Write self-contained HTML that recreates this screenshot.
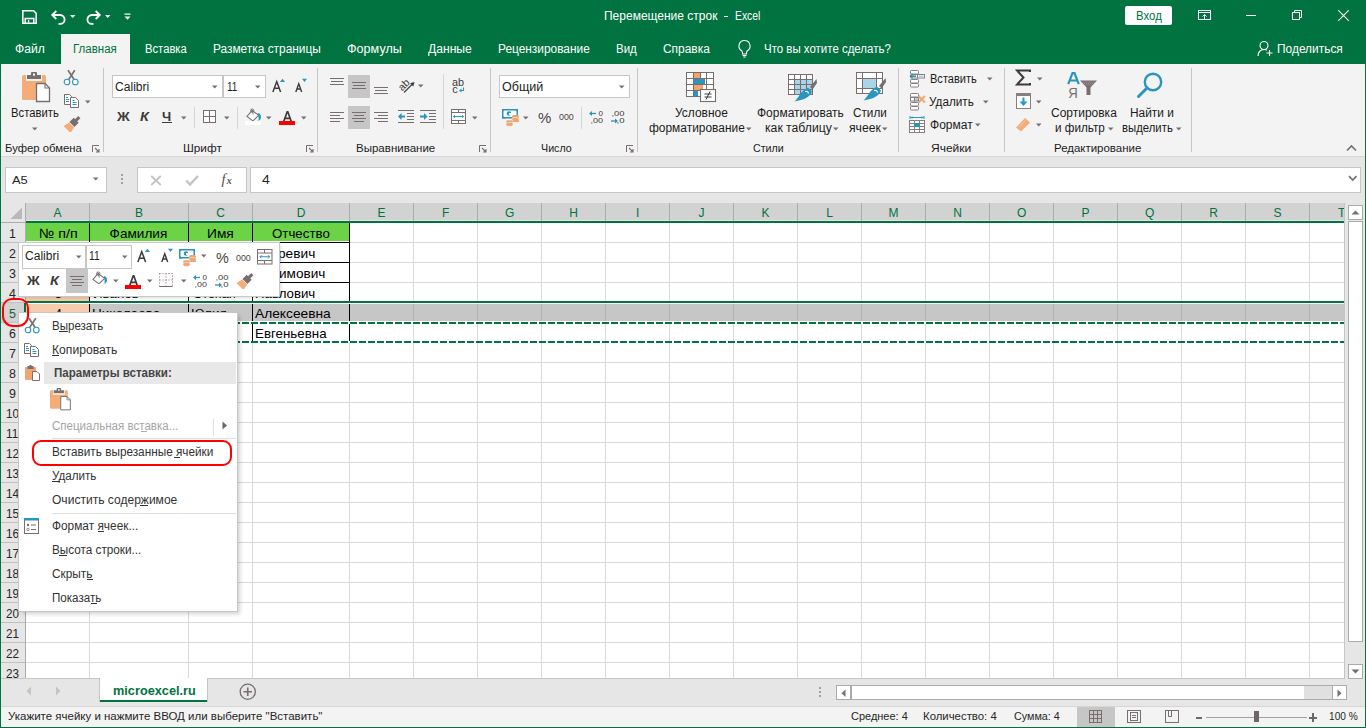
<!DOCTYPE html>
<html><head><meta charset="utf-8"><style>
html,body{margin:0;padding:0;}
body{width:1366px;height:728px;overflow:hidden;position:relative;background:#007340;font-family:"Liberation Sans",sans-serif;}
.a{position:absolute;display:block;}
.t{position:absolute;white-space:pre;line-height:20px;transform-origin:0 0;font-family:"Liberation Sans",sans-serif;}
</style></head><body>
<svg class="a" style="left:22px;top:10px;" width="15" height="15" viewBox="0 0 15 15"><path d="M0.8 0.8H11.6L14.2 3.4V13.2H0.8Z" fill="none" stroke="#ffffff" stroke-width="1.6"/><path d="M3.2 13V8.6H11.8V13" fill="none" stroke="#ffffff" stroke-width="1.5"/><path d="M6.6 9.8V12.6" stroke="#ffffff" stroke-width="1.3"/></svg>
<svg class="a" style="left:50px;top:9px;" width="17" height="16" viewBox="0 0 17 16"><path d="M2.5 6H10.2a4.4 4.4 0 0 1 0 8.8H8.5" fill="none" stroke="#ffffff" stroke-width="1.8"/><path d="M6.3 2L2.2 6L6.3 10" fill="none" stroke="#ffffff" stroke-width="1.8"/></svg>
<svg class="a" style="left:70px;top:15px;" width="6" height="4" viewBox="0 0 6 4"><path d="M0 0H5.5L2.75 3Z" fill="#ffffff"/></svg>
<svg class="a" style="left:85px;top:9px;" width="17" height="16" viewBox="0 0 17 16"><path d="M14.5 6H6.8a4.4 4.4 0 0 0 0 8.8H8.5" fill="none" stroke="#ffffff" stroke-width="1.8"/><path d="M10.7 2L14.8 6L10.7 10" fill="none" stroke="#ffffff" stroke-width="1.8"/></svg>
<svg class="a" style="left:105px;top:15px;" width="6" height="4" viewBox="0 0 6 4"><path d="M0 0H5.5L2.75 3Z" fill="#ffffff"/></svg>
<svg class="a" style="left:124px;top:13px;" width="8" height="8" viewBox="0 0 8 8"><rect x="0.5" y="0.5" width="6" height="1.2" fill="#ffffff"/><path d="M0.5 3.5H6.5L3.5 6.8Z" fill="#ffffff"/></svg>
<div class="t" style="left:604.20px;top:6.00px;font-size:12.3px;color:#ffffff;transform:scaleX(0.9757);">Перемещение строк</div>
<div class="a" style="left:724px;top:16px;width:4px;height:1px;background:#ffffff;"></div>
<div class="t" style="left:735.40px;top:6.00px;font-size:12.3px;color:#ffffff;transform:scaleX(0.8446);">Excel</div>
<div class="a" style="left:1125px;top:6px;width:47px;height:19px;background:#fff;border-radius:2px"></div>
<div class="t" style="left:1135.60px;top:6.00px;font-size:12px;color:#007340;transform:scaleX(0.9505);">Вход</div>
<svg class="a" style="left:1198px;top:10px;" width="14" height="11" viewBox="0 0 14 11"><rect x="0.5" y="0.5" width="12" height="9" fill="none" stroke="#ffffff" stroke-width="1"/><path d="M0.5 2.5H12.5" stroke="#ffffff" stroke-width="1"/><path d="M6.5 9.5V4.5M4.5 6.5L6.5 4.5L8.5 6.5" fill="none" stroke="#ffffff" stroke-width="1"/></svg>
<div class="a" style="left:1246px;top:15px;width:10px;height:1px;background:#ffffff;"></div>
<svg class="a" style="left:1291px;top:9px;" width="12" height="12" viewBox="0 0 12 12"><rect x="1.5" y="3.5" width="7" height="7" fill="none" stroke="#ffffff" stroke-width="1"/><path d="M3.5 3.5V1.5H10.5V8.5H8.5" fill="none" stroke="#ffffff" stroke-width="1"/></svg>
<svg class="a" style="left:1338px;top:10px;" width="11" height="11" viewBox="0 0 11 11"><path d="M0.3 0.3L10.7 10.7M10.7 0.3L0.3 10.7" stroke="#ffffff" stroke-width="1.1"/></svg>
<div class="a" style="left:61px;top:34px;width:69px;height:30px;background:#f3f3f3;"></div>
<div class="t" style="left:14.60px;top:39.00px;font-size:12px;color:#ffffff;transform:scaleX(1.0099);">Файл</div>
<div class="t" style="left:72.60px;top:39.00px;font-size:12px;color:#007340;transform:scaleX(0.9590);">Главная</div>
<div class="t" style="left:144.60px;top:39.00px;font-size:12px;color:#ffffff;transform:scaleX(0.9369);">Вставка</div>
<div class="t" style="left:212.60px;top:39.00px;font-size:12px;color:#ffffff;transform:scaleX(0.9902);">Разметка страницы</div>
<div class="t" style="left:346.60px;top:39.00px;font-size:12px;color:#ffffff;transform:scaleX(1.0493);">Формулы</div>
<div class="t" style="left:427.60px;top:39.00px;font-size:12px;color:#ffffff;transform:scaleX(1.0102);">Данные</div>
<div class="t" style="left:497.60px;top:39.00px;font-size:12px;color:#ffffff;transform:scaleX(0.9907);">Рецензирование</div>
<div class="t" style="left:615.60px;top:39.00px;font-size:12px;color:#ffffff;transform:scaleX(0.9582);">Вид</div>
<div class="t" style="left:662.60px;top:39.00px;font-size:12px;color:#ffffff;transform:scaleX(0.9939);">Справка</div>
<div class="t" style="left:763.60px;top:39.00px;font-size:12px;color:#ffffff;transform:scaleX(0.9558);">Что вы хотите сделать?</div>
<div class="t" style="left:1276.60px;top:39.00px;font-size:12px;color:#ffffff;transform:scaleX(0.9930);">Поделиться</div>
<svg class="a" style="left:736px;top:39px;" width="17" height="19" viewBox="0 0 17 19"><path d="M8.5 1.5a5.5 5.5 0 0 0-3.2 10c.8.6 1.2 1.4 1.2 2.3V15h4v-1.2c0-.9.4-1.7 1.2-2.3a5.5 5.5 0 0 0-3.2-10Z" fill="none" stroke="#ffffff" stroke-width="1.1"/><path d="M6.5 16.5H10.5M7.3 18H9.7" stroke="#ffffff" stroke-width="1"/></svg>
<svg class="a" style="left:1257px;top:40px;" width="17" height="17" viewBox="0 0 17 17"><circle cx="7" cy="5.5" r="4" fill="none" stroke="#ffffff" stroke-width="1.1"/><path d="M1 16c0-4 2.5-6.5 6-6.5c1.2 0 2.2.3 3 .8" fill="none" stroke="#ffffff" stroke-width="1.1"/><path d="M12.5 10V16M9.5 13H15.5" stroke="#ffffff" stroke-width="1.1"/></svg>
<div class="a" style="left:1px;top:64px;width:1364px;height:92px;background:#f3f3f3;"></div>
<div class="a" style="left:1px;top:156px;width:1364px;height:1px;background:#d6d6d6;"></div>
<div class="a" style="left:1px;top:157px;width:1364px;height:46px;background:#e6e6e6;"></div>
<div class="a" style="left:103px;top:68px;width:1px;height:84px;background:#c6c6c6;"></div>
<div class="a" style="left:317px;top:68px;width:1px;height:84px;background:#c6c6c6;"></div>
<div class="a" style="left:490px;top:68px;width:1px;height:84px;background:#c6c6c6;"></div>
<div class="a" style="left:637px;top:68px;width:1px;height:84px;background:#c6c6c6;"></div>
<div class="a" style="left:898px;top:68px;width:1px;height:84px;background:#c6c6c6;"></div>
<div class="a" style="left:1004px;top:68px;width:1px;height:84px;background:#c6c6c6;"></div>
<div class="a" style="left:1191px;top:68px;width:1px;height:84px;background:#c6c6c6;"></div>
<div class="t" style="left:5.00px;top:138.00px;font-size:11.6px;color:#1c1c1c;transform:scaleX(0.9755);">Буфер обмена</div>
<div class="t" style="left:183.00px;top:138.00px;font-size:11.6px;color:#1c1c1c;transform:scaleX(1.0167);">Шрифт</div>
<div class="t" style="left:356.10px;top:138.00px;font-size:11.6px;color:#1c1c1c;transform:scaleX(0.9932);">Выравнивание</div>
<div class="t" style="left:540.60px;top:138.00px;font-size:11.6px;color:#1c1c1c;transform:scaleX(0.9232);">Число</div>
<div class="t" style="left:752.60px;top:138.00px;font-size:11.6px;color:#1c1c1c;transform:scaleX(0.9216);">Стили</div>
<div class="t" style="left:930.60px;top:138.00px;font-size:11.6px;color:#1c1c1c;transform:scaleX(1.0358);">Ячейки</div>
<div class="t" style="left:1054.10px;top:138.00px;font-size:11.6px;color:#1c1c1c;transform:scaleX(0.9879);">Редактирование</div>
<svg class="a" style="left:92px;top:145px;" width="8" height="8" viewBox="0 0 8 8"><path d="M0.5 7V0.5H7" fill="none" stroke="#786e6e" stroke-width="1"/><path d="M3 3L7 7M7 4V7H4" fill="none" stroke="#786e6e" stroke-width="1.1"/></svg>
<svg class="a" style="left:306px;top:145px;" width="8" height="8" viewBox="0 0 8 8"><path d="M0.5 7V0.5H7" fill="none" stroke="#786e6e" stroke-width="1"/><path d="M3 3L7 7M7 4V7H4" fill="none" stroke="#786e6e" stroke-width="1.1"/></svg>
<svg class="a" style="left:626px;top:145px;" width="8" height="8" viewBox="0 0 8 8"><path d="M0.5 7V0.5H7" fill="none" stroke="#786e6e" stroke-width="1"/><path d="M3 3L7 7M7 4V7H4" fill="none" stroke="#786e6e" stroke-width="1.1"/></svg>
<svg class="a" style="left:1346px;top:144px;" width="11" height="8" viewBox="0 0 11 8"><path d="M1 6.5L5.5 2L10 6.5" fill="none" stroke="#786e6e" stroke-width="1.6"/></svg>
<svg class="a" style="left:22px;top:72px;" width="31" height="33" viewBox="0 0 31 33"><g transform="scale(1.0)"><rect x="0" y="3" width="24" height="25" rx="1.5" fill="#f4ad79"/><rect x="4" y="2" width="16" height="7" fill="#f3f3f3"/><path d="M5 3H9V1Q9 0 10 0H14Q15 0 15 1V3H19V7H5Z" fill="#786e6e"/><rect x="11" y="1.6" width="2" height="2" fill="#fff"/><path d="M14.5 11.5H23L27.5 16V29.5H14.5Z" fill="#fff" stroke="#786e6e" stroke-width="1.3"/><path d="M23 11.5V16H27.5" fill="none" stroke="#786e6e" stroke-width="1.1"/></g></svg>
<div class="t" style="left:10.60px;top:103.00px;font-size:12px;color:#1c1c1c;transform:scaleX(0.9397);">Вставить</div>
<svg class="a" style="left:32px;top:127px;" width="6" height="4" viewBox="0 0 6 4"><path d="M0 0.5H5.5L2.75 3.5Z" fill="#786e6e"/></svg>
<svg class="a" style="left:63px;top:69px;" width="17" height="17" viewBox="0 0 17 17"><path d="M5 1.2L11.2 10.6M11.8 1.2L5.6 10.6" stroke="#786e6e" stroke-width="1.7"/><circle cx="4" cy="13" r="2.8" fill="#fff" stroke="#2a95bd" stroke-width="1.1"/><circle cx="12.3" cy="13" r="2.8" fill="#fff" stroke="#2a95bd" stroke-width="1.1"/></svg>
<svg class="a" style="left:64px;top:94px;" width="16" height="15" viewBox="0 0 16 15"><path d="M0.5 0.5H5.5L7.5 2.5V10.5H0.5Z" fill="#fff" stroke="#786e6e" stroke-width="1"/><path d="M2 3.5H4M2 5.5H5M2 7.5H5" stroke="#2a95bd" stroke-width="1"/><path d="M6.5 3.5H11.5L14.5 6.5V13.5H6.5Z" fill="#fff" stroke="#786e6e" stroke-width="1"/><path d="M8.5 6.5H10.5M8.5 8.5H12.5M8.5 10.5H12.5" stroke="#2a95bd" stroke-width="1"/></svg>
<svg class="a" style="left:85px;top:100px;" width="6" height="4" viewBox="0 0 6 4"><path d="M0 0.5H5.5L2.75 3.5Z" fill="#786e6e"/></svg>
<svg class="a" style="left:64px;top:116px;" width="17" height="16" viewBox="0 0 17 16"><g transform="translate(9,7.5) rotate(45) translate(-7,-9)"><rect x="5.5" y="0" width="3" height="5" fill="#786e6e"/><rect x="3.5" y="4.5" width="7" height="6" fill="#786e6e"/><path d="M3.5 11H10.5L12 17.5H2Z" fill="#f4ad79"/></g></svg>
<div class="a" style="left:112px;top:75px;width:111px;height:23px;background:#fff;box-shadow:inset 0 0 0 1px #c6c6c6"></div>
<div class="a" style="left:223px;top:75px;width:43px;height:23px;background:#fff;box-shadow:inset 0 0 0 1px #c6c6c6"></div>
<div class="t" style="left:115.10px;top:77.00px;font-size:12.5px;color:#1c1c1c;transform:scaleX(0.9682);">Calibri</div>
<div class="t" style="left:227.10px;top:77.00px;font-size:12.5px;color:#1c1c1c;transform:scaleX(0.7938);">11</div>
<svg class="a" style="left:212px;top:85px;" width="6" height="4" viewBox="0 0 6 4"><path d="M0 0.5H5.5L2.75 3.5Z" fill="#786e6e"/></svg>
<svg class="a" style="left:255px;top:85px;" width="6" height="4" viewBox="0 0 6 4"><path d="M0 0.5H5.5L2.75 3.5Z" fill="#786e6e"/></svg>
<svg class="a" style="left:272px;top:78px;" width="14" height="15" viewBox="0 0 14 15"><path d="M0.9 13.9L4.75 3.6L8.6 13.9M2.4 10.2H7.1" fill="none" stroke="#3d3a3a" stroke-width="1.5"/><path d="M7.9 3.9L10.5 0.8L13.1 3.9Z" fill="#2a95bd"/></svg>
<svg class="a" style="left:295px;top:78px;" width="13" height="15" viewBox="0 0 13 15"><path d="M0.8 13.9L3.75 5.8L6.7 13.9M2 11H5.5" fill="none" stroke="#3d3a3a" stroke-width="1.4"/><path d="M7 0.8H12L9.5 3.9Z" fill="#2a95bd"/></svg>
<div class="t" style="left:116.64px;top:107.00px;font-size:12.5px;color:#3d3a3a;font-weight:700;transform:scaleX(1.1228);">Ж</div>
<div class="t" style="left:139.60px;top:107.00px;font-size:12px;color:#3d3a3a;font-weight:700;transform:scaleX(1.1983);font-style:italic;">К</div>
<div class="t" style="left:162.20px;top:107.00px;font-size:12.5px;color:#3d3a3a;font-weight:700;transform:scaleX(1.0469);">Ч</div>
<div class="a" style="left:162px;top:122px;width:10px;height:1px;background:#3d3a3a;"></div>
<svg class="a" style="left:181px;top:116px;" width="6" height="4" viewBox="0 0 6 4"><path d="M0 0.5H5.5L2.75 3.5Z" fill="#786e6e"/></svg>
<div class="a" style="left:194px;top:107px;width:1px;height:21px;background:#d6d6d6;"></div>
<svg class="a" style="left:203px;top:110px;" width="14" height="14" viewBox="0 0 14 14"><rect x="0.5" y="0.5" width="12" height="12" fill="#fff" stroke="#786e6e" stroke-width="1"/><path d="M6.5 0.5V12.5M0.5 6.5H12.5" stroke="#786e6e" stroke-width="1"/></svg>
<svg class="a" style="left:224px;top:116px;" width="6" height="4" viewBox="0 0 6 4"><path d="M0 0.5H5.5L2.75 3.5Z" fill="#786e6e"/></svg>
<div class="a" style="left:237px;top:107px;width:1px;height:22px;background:#d6d6d6;"></div>
<svg class="a" style="left:245px;top:108px;" width="18" height="18" viewBox="0 0 18 18"><path d="M2 8.4L7.1 2.5L13.7 7.3L7.9 12.9Z" fill="#fff" stroke="#786e6e" stroke-width="1.1"/><circle cx="7.2" cy="2.6" r="1.6" fill="none" stroke="#786e6e" stroke-width="1"/><path d="M7.2 2.5L8.3 6.5" stroke="#786e6e" stroke-width="1"/><path d="M13 5C15 5.5 16.2 7 16 9.5C15.8 11.5 14.5 12.5 13.2 12.8C14 11 13.8 9 13 7.5Z" fill="#2a95bd"/><rect x="0" y="13" width="16" height="4" fill="#fff"/></svg>
<svg class="a" style="left:266px;top:116px;" width="6" height="4" viewBox="0 0 6 4"><path d="M0 0.5H5.5L2.75 3.5Z" fill="#786e6e"/></svg>
<svg class="a" style="left:279px;top:110px;" width="17" height="16" viewBox="0 0 17 16"><path d="M4.8 11.2L8.2 1.8H8.8L12.2 11.2M6 8.3H11" fill="none" stroke="#3d3a3a" stroke-width="1.7"/><rect x="0" y="11" width="16" height="4" fill="#ff0000"/></svg>
<svg class="a" style="left:301px;top:116px;" width="6" height="4" viewBox="0 0 6 4"><path d="M0 0.5H5.5L2.75 3.5Z" fill="#786e6e"/></svg>
<div class="a" style="left:348px;top:75px;width:22px;height:23px;background:#c6c6c6;"></div>
<div class="a" style="left:348px;top:106px;width:22px;height:23px;background:#c6c6c6;"></div>
<div class="a" style="left:330px;top:78px;width:14px;height:1px;background:#786e6e;"></div><div class="a" style="left:331px;top:81px;width:12px;height:1px;background:#786e6e;"></div><div class="a" style="left:330px;top:84px;width:14px;height:1px;background:#786e6e;"></div>
<div class="a" style="left:352px;top:82px;width:14px;height:1px;background:#786e6e;"></div><div class="a" style="left:353px;top:85px;width:12px;height:1px;background:#786e6e;"></div><div class="a" style="left:352px;top:88px;width:14px;height:1px;background:#786e6e;"></div>
<div class="a" style="left:374px;top:87px;width:14px;height:1px;background:#786e6e;"></div><div class="a" style="left:375px;top:90px;width:12px;height:1px;background:#786e6e;"></div><div class="a" style="left:374px;top:93px;width:14px;height:1px;background:#786e6e;"></div>
<div class="a" style="left:330px;top:112px;width:14px;height:1px;background:#786e6e;"></div><div class="a" style="left:330px;top:115px;width:10px;height:1px;background:#786e6e;"></div><div class="a" style="left:330px;top:118px;width:14px;height:1px;background:#786e6e;"></div><div class="a" style="left:330px;top:121px;width:10px;height:1px;background:#786e6e;"></div>
<div class="a" style="left:352px;top:112px;width:14px;height:1px;background:#786e6e;"></div><div class="a" style="left:354px;top:115px;width:10px;height:1px;background:#786e6e;"></div><div class="a" style="left:352px;top:118px;width:14px;height:1px;background:#786e6e;"></div><div class="a" style="left:354px;top:121px;width:10px;height:1px;background:#786e6e;"></div>
<div class="a" style="left:374px;top:112px;width:14px;height:1px;background:#786e6e;"></div><div class="a" style="left:378px;top:115px;width:10px;height:1px;background:#786e6e;"></div><div class="a" style="left:374px;top:118px;width:14px;height:1px;background:#786e6e;"></div><div class="a" style="left:378px;top:121px;width:10px;height:1px;background:#786e6e;"></div>
<svg class="a" style="left:397px;top:76px;" width="20" height="20" viewBox="0 0 20 20"><text x="0" y="0" transform="translate(5.2,15.5) rotate(-45)" font-family="Liberation Sans" font-size="10.5" fill="#3d3a3a">ab</text><path d="M7 16.5L16 7.5" stroke="#3d3a3a" stroke-width="1.1"/><path d="M17.5 6L13 7.2L16.3 10.5Z" fill="#3d3a3a"/></svg>
<svg class="a" style="left:418px;top:84px;" width="6" height="4" viewBox="0 0 6 4"><path d="M0 0.5H5.5L2.75 3.5Z" fill="#786e6e"/></svg>
<svg class="a" style="left:398px;top:109px;" width="17" height="15" viewBox="0 0 17 15"><path d="M0 1.5H16M9 4.5H16M9 7.5H16M9 10.5H16M0 13.5H16" stroke="#786e6e" stroke-width="1"/><path d="M7 7.5H2.5" stroke="#2a95bd" stroke-width="2"/><path d="M0 7.5L3.5 4V11Z" fill="#2a95bd"/></svg>
<svg class="a" style="left:420px;top:109px;" width="17" height="15" viewBox="0 0 17 15"><path d="M0 1.5H16M9 4.5H16M9 7.5H16M9 10.5H16M0 13.5H16" stroke="#786e6e" stroke-width="1"/><path d="M0 7.5H4.5" stroke="#2a95bd" stroke-width="2"/><path d="M7.5 7.5L4 4V11Z" fill="#2a95bd"/></svg>
<div class="a" style="left:443px;top:74px;width:1px;height:55px;background:#d6d6d6;"></div>
<svg class="a" style="left:452px;top:77px;" width="16" height="18" viewBox="0 0 16 18"><text x="0" y="8.8" font-family="Liberation Sans" font-size="11" fill="#3d3a3a" textLength="12" lengthAdjust="spacingAndGlyphs">ab</text><text x="0.3" y="16.3" font-family="Liberation Sans" font-size="11" fill="#3d3a3a">c</text><path d="M11.5 10.5V13.5H8.5" fill="none" stroke="#2a95bd" stroke-width="1.1"/><path d="M7 13.5L9.5 11.5V15.5Z" fill="#2a95bd"/></svg>
<svg class="a" style="left:451px;top:109px;" width="16" height="16" viewBox="0 0 16 16"><rect x="0.5" y="0.5" width="14" height="14" fill="#fff" stroke="#786e6e" stroke-width="1"/><path d="M0.5 3.5H15M0.5 11.5H15M7.5 0.5V3.5M7.5 11.5V15" stroke="#786e6e" stroke-width="1"/><path d="M3 7.5H12" stroke="#2a95bd" stroke-width="1"/><path d="M1.8 7.5L4 5.8V9.2ZM13.2 7.5L11 5.8V9.2Z" fill="#2a95bd"/></svg>
<svg class="a" style="left:472px;top:116px;" width="6" height="4" viewBox="0 0 6 4"><path d="M0 0.5H5.5L2.75 3.5Z" fill="#786e6e"/></svg>
<svg class="a" style="left:479px;top:145px;" width="8" height="8" viewBox="0 0 8 8"><path d="M0.5 7V0.5H7" fill="none" stroke="#786e6e" stroke-width="1"/><path d="M3 3L7 7M7 4V7H4" fill="none" stroke="#786e6e" stroke-width="1.1"/></svg>
<div class="a" style="left:499px;top:75px;width:131px;height:23px;background:#fff;box-shadow:inset 0 0 0 1px #c6c6c6"></div>
<div class="t" style="left:502.10px;top:77.00px;font-size:12.5px;color:#1c1c1c;transform:scaleX(1.0040);">Общий</div>
<svg class="a" style="left:619px;top:85px;" width="6" height="4" viewBox="0 0 6 4"><path d="M0 0.5H5.5L2.75 3.5Z" fill="#786e6e"/></svg>
<svg class="a" style="left:502px;top:109px;" width="18" height="18" viewBox="0 0 18 18"><rect x="0.75" y="0.75" width="14.5" height="8" fill="#fff" stroke="#2a95bd" stroke-width="1.5"/><path d="M0 0H3.5L0 3.5ZM16 0H12.5L16 3.5ZM0 9.5V6L3.5 9.5Z" fill="#2a95bd"/><circle cx="7" cy="4.5" r="2.3" fill="#2a95bd"/><rect x="7" y="4" width="2.5" height="2" fill="#fff"/><rect x="10" y="6" width="7" height="3.6" rx="1.6" fill="#f2a46e"/><rect x="10" y="8.6" width="7" height="3.6" rx="1.6" fill="#f2a46e" stroke="#f3f3f3" stroke-width="0.6"/><rect x="10" y="11.2" width="7" height="1.8" fill="#f2a46e"/><rect x="4" y="11" width="7" height="3.6" rx="1.6" fill="#f2a46e" stroke="#f3f3f3" stroke-width="0.6"/><rect x="4" y="13.6" width="7" height="3.6" rx="1.6" fill="#f2a46e" stroke="#f3f3f3" stroke-width="0.6"/></svg>
<svg class="a" style="left:523px;top:116px;" width="6" height="4" viewBox="0 0 6 4"><path d="M0 0.5H5.5L2.75 3.5Z" fill="#786e6e"/></svg>
<div class="t" style="left:538.10px;top:107.50px;font-size:15px;color:#4a4444;transform:scaleX(0.9974);">%</div>
<div class="t" style="left:558.60px;top:106.50px;font-size:9.5px;color:#4a4444;transform:scaleX(0.9340);">000</div>
<div class="a" style="left:581px;top:107px;width:1px;height:22px;background:#d6d6d6;"></div>
<svg class="a" style="left:589px;top:110px;" width="16" height="15" viewBox="0 0 16 15"><path d="M7 3.5H2" stroke="#2a95bd" stroke-width="1.3"/><path d="M0 3.5L3 1V6Z" fill="#2a95bd"/><text x="9.6" y="6" font-family="Liberation Sans" font-size="8" fill="#3d3a3a">0</text><text x="1.6" y="13.4" font-family="Liberation Sans" font-size="8" fill="#3d3a3a" textLength="12.5" lengthAdjust="spacingAndGlyphs">,00</text></svg>
<svg class="a" style="left:611px;top:110px;" width="16" height="15" viewBox="0 0 16 15"><text x="0.5" y="6" font-family="Liberation Sans" font-size="8" fill="#3d3a3a" textLength="13" lengthAdjust="spacingAndGlyphs">,00</text><path d="M0 11H5" stroke="#2a95bd" stroke-width="1.3"/><path d="M7 11L4 8.5V13.5Z" fill="#2a95bd"/><text x="5.5" y="13.4" font-family="Liberation Sans" font-size="8" fill="#3d3a3a" textLength="8" lengthAdjust="spacingAndGlyphs">,0</text></svg>
<svg class="a" style="left:686px;top:72px;" width="31" height="31" viewBox="0 0 31 31"><rect x="0.5" y="0.5" width="27" height="24" fill="#fff" stroke="#786e6e" stroke-width="1"/><path d="M7.5 0.5V24.5" stroke="#786e6e" stroke-width="1"/><path d="M14.5 0.5V24.5" stroke="#786e6e" stroke-width="1"/><path d="M20.5 0.5V24.5" stroke="#786e6e" stroke-width="1"/><path d="M0.5 6.5H27.5" stroke="#786e6e" stroke-width="1"/><path d="M0.5 12.5H27.5" stroke="#786e6e" stroke-width="1"/><path d="M0.5 18.5H27.5" stroke="#786e6e" stroke-width="1"/><rect x="8" y="1" width="6" height="5" fill="#f2a46e"/><rect x="8" y="7" width="11" height="5" fill="#2a95bd"/><rect x="8" y="13" width="9" height="5" fill="#f2a46e"/><rect x="8" y="19" width="4" height="5.5" fill="#2a95bd"/><rect x="14.5" y="17.5" width="15" height="12" fill="#fff" stroke="#786e6e" stroke-width="1.1"/><path d="M18.5 22H25.5M18.5 25H25.5M24 19.5L20 27.5" stroke="#3d3a3a" stroke-width="1"/></svg>
<div class="t" style="left:674.60px;top:103.00px;font-size:12px;color:#1c1c1c;transform:scaleX(0.9966);">Условное</div>
<div class="t" style="left:648.60px;top:118.00px;font-size:12px;color:#1c1c1c;transform:scaleX(0.9943);">форматирование</div>
<svg class="a" style="left:746px;top:127px;" width="6" height="4" viewBox="0 0 6 4"><path d="M0 0.5H5.5L2.75 3.5Z" fill="#786e6e"/></svg>
<svg class="a" style="left:788px;top:72px;" width="31" height="31" viewBox="0 0 31 31"><rect x="0.5" y="2.5" width="24" height="20" fill="#fff" stroke="#786e6e" stroke-width="1"/><rect x="7" y="8" width="17" height="14" fill="#a9d5e8"/><path d="M6.5 2.5V22.5" stroke="#786e6e" stroke-width="1"/><path d="M12.5 2.5V22.5" stroke="#786e6e" stroke-width="1"/><path d="M18.5 2.5V22.5" stroke="#786e6e" stroke-width="1"/><path d="M0.5 7.5H24.5" stroke="#786e6e" stroke-width="1"/><path d="M0.5 12.5H24.5" stroke="#786e6e" stroke-width="1"/><path d="M0.5 17.5H24.5" stroke="#786e6e" stroke-width="1"/><path d="M7 8H24M7 8V22" stroke="#786e6e" stroke-width="0"/><path d="M28.5 7L22 15L24.5 17.5L29 11Z" fill="#786e6e"/><path d="M20 15.5L24 19.5C22 25 16 28 6.5 29.5C11 26 12 19 20 15.5Z" fill="#2a95bd"/><path d="M17 19.5C19 19 20.5 20 20.5 21.5" stroke="#fff" stroke-width="1.2" fill="none"/></svg>
<div class="t" style="left:756.60px;top:103.00px;font-size:12px;color:#1c1c1c;transform:scaleX(0.9969);">Форматировать</div>
<div class="t" style="left:764.60px;top:118.00px;font-size:12px;color:#1c1c1c;transform:scaleX(1.0164);">как таблицу</div>
<svg class="a" style="left:833px;top:127px;" width="6" height="4" viewBox="0 0 6 4"><path d="M0 0.5H5.5L2.75 3.5Z" fill="#786e6e"/></svg>
<svg class="a" style="left:856px;top:72px;" width="31" height="31" viewBox="0 0 31 31"><rect x="0.5" y="0.5" width="26" height="21" fill="#fff" stroke="#786e6e" stroke-width="1"/><rect x="6.5" y="6.5" width="14" height="10" fill="#a9d5e8" stroke="#786e6e" stroke-width="1"/><path d="M0.5 6.5H26.5M0.5 16.5H26.5M6.5 0.5V21.5M20.5 0.5V21.5" stroke="#786e6e" stroke-width="1"/><path d="M29.5 6L23 14L25.5 16.5L30 10Z" fill="#786e6e"/><path d="M21 14.5L25 18.5C23 24 17 27 7.5 28.5C12 25 13 18 21 14.5Z" fill="#2a95bd"/><path d="M18 18.5C20 18 21.5 19 21.5 20.5" stroke="#fff" stroke-width="1.2" fill="none"/></svg>
<div class="t" style="left:852.60px;top:103.00px;font-size:12px;color:#1c1c1c;transform:scaleX(0.9777);">Стили</div>
<div class="t" style="left:848.60px;top:118.00px;font-size:12px;color:#1c1c1c;transform:scaleX(1.0122);">ячеек</div>
<svg class="a" style="left:882px;top:127px;" width="6" height="4" viewBox="0 0 6 4"><path d="M0 0.5H5.5L2.75 3.5Z" fill="#786e6e"/></svg>
<svg class="a" style="left:909px;top:70px;" width="18" height="18" viewBox="0 0 18 18"><rect x="1.5" y="0.5" width="8" height="3.5" rx="0.8" fill="#fff" stroke="#8a7f7f" stroke-width="1"/><rect x="1.5" y="9.5" width="8" height="3.5" rx="0.8" fill="#fff" stroke="#8a7f7f" stroke-width="1"/><rect x="1.5" y="13.5" width="8" height="3.5" rx="0.8" fill="#fff" stroke="#8a7f7f" stroke-width="1"/><rect x="1.5" y="4.5" width="8" height="3.5" rx="0.8" fill="#fff" stroke="#8a7f7f" stroke-width="1"/><rect x="8.5" y="4.5" width="7" height="3.5" fill="#fff" stroke="#8a7f7f" stroke-width="1"/><rect x="9.5" y="5.5" width="5" height="2" fill="#a9d5e8"/><rect x="15.5" y="4.5" width="0" height="0" fill="none"/><path d="M7 6.2H2.5" stroke="#2a95bd" stroke-width="1.6"/><path d="M0.5 6.2L3.5 3.5V9Z" fill="#2a95bd"/></svg>
<div class="t" style="left:929.60px;top:69.00px;font-size:12px;color:#1c1c1c;transform:scaleX(0.9200);">Вставить</div>
<svg class="a" style="left:987px;top:77px;" width="6" height="4" viewBox="0 0 6 4"><path d="M0 0.5H5.5L2.75 3.5Z" fill="#786e6e"/></svg>
<svg class="a" style="left:909px;top:93px;" width="18" height="18" viewBox="0 0 18 18"><rect x="1.5" y="0.5" width="8" height="3.5" rx="0.8" fill="#fff" stroke="#8a7f7f" stroke-width="1"/><rect x="1.5" y="9.5" width="8" height="3.5" rx="0.8" fill="#fff" stroke="#8a7f7f" stroke-width="1"/><rect x="1.5" y="13.5" width="8" height="3.5" rx="0.8" fill="#fff" stroke="#8a7f7f" stroke-width="1"/><rect x="1.5" y="4.5" width="4" height="3.5" fill="#fff" stroke="#8a7f7f" stroke-width="1"/><rect x="5.5" y="4.5" width="4" height="3.5" fill="#a9d5e8" stroke="#8a7f7f" stroke-width="1"/><path d="M9.5 3L16 9.5M16 3L9.5 9.5" stroke="#f2a46e" stroke-width="1.8"/></svg>
<div class="t" style="left:928.60px;top:92.00px;font-size:12px;color:#1c1c1c;transform:scaleX(0.9778);">Удалить</div>
<svg class="a" style="left:983px;top:100px;" width="6" height="4" viewBox="0 0 6 4"><path d="M0 0.5H5.5L2.75 3.5Z" fill="#786e6e"/></svg>
<svg class="a" style="left:909px;top:116px;" width="18" height="18" viewBox="0 0 18 18"><path d="M1.5 1.5H14.5" stroke="#2a95bd" stroke-width="1"/><path d="M1 0V3M15 0V3" stroke="#2a95bd" stroke-width="1"/><path d="M1.5 1.5L3.5 0.2V2.8ZM14.5 1.5L12.5 0.2V2.8Z" fill="#2a95bd"/><rect x="0.5" y="4.5" width="15" height="12" fill="#fff" stroke="#8a7f7f" stroke-width="1"/><path d="M0.5 7.5H15.5M0.5 10.5H15.5M0.5 13.5H15.5M5.5 4.5V16.5M10.5 4.5V16.5" stroke="#8a7f7f" stroke-width="1"/><rect x="5" y="7" width="6" height="4" fill="#2a95bd"/></svg>
<div class="t" style="left:929.60px;top:115.00px;font-size:12px;color:#1c1c1c;transform:scaleX(1.0041);">Формат</div>
<svg class="a" style="left:975px;top:123px;" width="6" height="4" viewBox="0 0 6 4"><path d="M0 0.5H5.5L2.75 3.5Z" fill="#786e6e"/></svg>
<svg class="a" style="left:1015px;top:69px;" width="18" height="18" viewBox="0 0 18 18"><path d="M15 3V1.5H2L8.5 8.5L2 15.5H15V14" fill="none" stroke="#3d3a3a" stroke-width="2"/></svg>
<svg class="a" style="left:1037px;top:77px;" width="6" height="4" viewBox="0 0 6 4"><path d="M0 0.5H5.5L2.75 3.5Z" fill="#786e6e"/></svg>
<svg class="a" style="left:1016px;top:93px;" width="16" height="17" viewBox="0 0 16 17"><rect x="0.5" y="0.5" width="14" height="15" fill="#fff" stroke="#8a7f7f" stroke-width="1"/><rect x="0.5" y="0.5" width="14" height="2.5" fill="#8a7f7f"/><path d="M7.5 4.5V11" stroke="#2a95bd" stroke-width="2"/><path d="M3.5 8.5L7.5 13L11.5 8.5Z" fill="#2a95bd"/></svg>
<svg class="a" style="left:1036px;top:100px;" width="6" height="4" viewBox="0 0 6 4"><path d="M0 0.5H5.5L2.75 3.5Z" fill="#786e6e"/></svg>
<svg class="a" style="left:1015px;top:116px;" width="17" height="16" viewBox="0 0 17 16"><path d="M1 11.5L10 2L15 6.5L6 15.5Z" fill="#f4ad79"/><path d="M4.5 10.5L10.5 4.5" stroke="#fff" stroke-width="0.8" stroke-dasharray="1 1"/></svg>
<svg class="a" style="left:1036px;top:123px;" width="6" height="4" viewBox="0 0 6 4"><path d="M0 0.5H5.5L2.75 3.5Z" fill="#786e6e"/></svg>
<svg class="a" style="left:1066px;top:71px;" width="33" height="29" viewBox="0 0 33 29"><path d="M2.2 13.2L6.5 2.2H8.5L12.8 13.2M4.2 9.5H10.8" fill="none" stroke="#2a95bd" stroke-width="2.2"/><text x="2.3" y="27" font-family="Liberation Sans" font-size="14" fill="#786e6e" textLength="9.5" lengthAdjust="spacingAndGlyphs">Я</text><path d="M14 9.5H31L24.5 16.5V24H20.5V16.5Z" fill="#786e6e"/><path d="M16.5 11H29M18 12.5H27.5M19.5 14H26" stroke="#bdb5b5" stroke-width="0.6" stroke-dasharray="1 1"/></svg>
<div class="t" style="left:1050.60px;top:103.00px;font-size:12px;color:#1c1c1c;transform:scaleX(0.9990);">Сортировка</div>
<div class="t" style="left:1054.60px;top:118.00px;font-size:12px;color:#1c1c1c;transform:scaleX(0.9746);">и фильтр</div>
<svg class="a" style="left:1108px;top:127px;" width="6" height="4" viewBox="0 0 6 4"><path d="M0 0.5H5.5L2.75 3.5Z" fill="#786e6e"/></svg>
<svg class="a" style="left:1136px;top:71px;" width="29" height="29" viewBox="0 0 29 29"><circle cx="17" cy="11" r="8.2" fill="none" stroke="#2a95bd" stroke-width="2.4"/><path d="M11 17L2.5 25.5" stroke="#2a95bd" stroke-width="3" stroke-linecap="round"/></svg>
<div class="t" style="left:1129.60px;top:103.00px;font-size:12px;color:#1c1c1c;transform:scaleX(0.9892);">Найти и</div>
<div class="t" style="left:1121.60px;top:118.00px;font-size:12px;color:#1c1c1c;transform:scaleX(0.9454);">выделить</div>
<svg class="a" style="left:1176px;top:127px;" width="6" height="4" viewBox="0 0 6 4"><path d="M0 0.5H5.5L2.75 3.5Z" fill="#786e6e"/></svg>
<div class="a" style="left:5px;top:167px;width:102px;height:26px;background:#fff;box-shadow:inset 0 0 0 1px #c6c6c6"></div>
<div class="t" style="left:11.60px;top:170.00px;font-size:11.8px;color:#262626;transform:scaleX(1.0948);">A5</div>
<svg class="a" style="left:93px;top:177px;" width="6" height="4" viewBox="0 0 6 4"><path d="M0 0.5H5.5L2.75 3.5Z" fill="#786e6e"/></svg>
<div class="a" style="left:121px;top:174px;width:2px;height:2px;background:#a0a0a0;"></div>
<div class="a" style="left:121px;top:178px;width:2px;height:2px;background:#a0a0a0;"></div>
<div class="a" style="left:121px;top:182px;width:2px;height:2px;background:#a0a0a0;"></div>
<div class="a" style="left:137px;top:167px;width:110px;height:26px;background:#fff;box-shadow:inset 0 0 0 1px #c6c6c6"></div>
<svg class="a" style="left:150px;top:175px;" width="12" height="11" viewBox="0 0 12 11"><path d="M1.2 1L10.8 10M10.8 1L1.2 10" stroke="#c4c4c4" stroke-width="1.8"/></svg>
<svg class="a" style="left:185px;top:175px;" width="14" height="11" viewBox="0 0 14 11"><path d="M1.2 5.5L5 9.5L13 1" fill="none" stroke="#c4c4c4" stroke-width="2.4"/></svg>
<svg class="a" style="left:221px;top:172px;" width="14" height="15" viewBox="0 0 14 15"><text x="0.5" y="11.5" font-family="Liberation Serif" font-style="italic" font-size="14.5" fill="#5a5050">f</text><text x="5.8" y="11.5" font-family="Liberation Serif" font-style="italic" font-weight="700" font-size="10" fill="#5a5050">x</text></svg>
<div class="a" style="left:250px;top:167px;width:1111px;height:26px;background:#fff;box-shadow:inset 0 0 0 1px #c6c6c6"></div>
<div class="t" style="left:261.60px;top:169.50px;font-size:13.5px;color:#262626;transform:scaleX(1.0392);">4</div>
<svg class="a" style="left:1348px;top:175px;" width="10" height="7" viewBox="0 0 10 7"><path d="M1 1.2L4.75 5L8.5 1.2" fill="none" stroke="#786e6e" stroke-width="1.7"/></svg>
<div class="a" style="left:25px;top:203px;width:1319px;height:476px;background:#fff;"></div>
<div class="a" style="left:1px;top:203px;width:24px;height:476px;background:#e6e6e6;"></div>
<div class="a" style="left:1344px;top:203px;width:21px;height:476px;background:#e6e6e6;"></div>
<svg class="a" style="left:10px;top:207px;" width="13" height="13" viewBox="0 0 13 13"><path d="M12 0.5V12H0.5Z" fill="#b9b9b9"/></svg>
<div class="a" style="left:1px;top:222px;width:24px;height:1px;background:#ababab;"></div>
<div class="a" style="left:25px;top:203px;width:1319px;height:18px;background:#d2d2d2;"></div>
<div class="a" style="left:25px;top:220px;width:1319px;height:1px;background:#e4e4e4;"></div>
<div class="a" style="left:25px;top:221px;width:1319px;height:2px;background:#007340;"></div>
<div class="a" style="left:25px;top:203px;width:1px;height:18px;background:#ababab;"></div>
<div class="t" style="left:53.60px;top:203.00px;font-size:12px;color:#007340;">A</div>
<div class="a" style="left:89px;top:203px;width:1px;height:18px;background:#ababab;"></div>
<div class="t" style="left:135.10px;top:203.00px;font-size:12px;color:#007340;">B</div>
<div class="a" style="left:188px;top:203px;width:1px;height:18px;background:#ababab;"></div>
<div class="t" style="left:216.27px;top:203.00px;font-size:12px;color:#007340;">C</div>
<div class="a" style="left:252px;top:203px;width:1px;height:18px;background:#ababab;"></div>
<div class="t" style="left:296.77px;top:203.00px;font-size:12px;color:#007340;">D</div>
<div class="a" style="left:349px;top:203px;width:1px;height:18px;background:#ababab;"></div>
<div class="t" style="left:377.60px;top:203.00px;font-size:12px;color:#007340;">E</div>
<div class="a" style="left:413px;top:203px;width:1px;height:18px;background:#ababab;"></div>
<div class="t" style="left:441.93px;top:203.00px;font-size:12px;color:#007340;">F</div>
<div class="a" style="left:477px;top:203px;width:1px;height:18px;background:#ababab;"></div>
<div class="t" style="left:504.93px;top:203.00px;font-size:12px;color:#007340;">G</div>
<div class="a" style="left:541px;top:203px;width:1px;height:18px;background:#ababab;"></div>
<div class="t" style="left:569.27px;top:203.00px;font-size:12px;color:#007340;">H</div>
<div class="a" style="left:605px;top:203px;width:1px;height:18px;background:#ababab;"></div>
<div class="t" style="left:635.93px;top:203.00px;font-size:12px;color:#007340;">I</div>
<div class="a" style="left:669px;top:203px;width:1px;height:18px;background:#ababab;"></div>
<div class="t" style="left:698.60px;top:203.00px;font-size:12px;color:#007340;">J</div>
<div class="a" style="left:733px;top:203px;width:1px;height:18px;background:#ababab;"></div>
<div class="t" style="left:761.60px;top:203.00px;font-size:12px;color:#007340;">K</div>
<div class="a" style="left:797px;top:203px;width:1px;height:18px;background:#ababab;"></div>
<div class="t" style="left:826.26px;top:203.00px;font-size:12px;color:#007340;">L</div>
<div class="a" style="left:861px;top:203px;width:1px;height:18px;background:#ababab;"></div>
<div class="t" style="left:888.60px;top:203.00px;font-size:12px;color:#007340;">M</div>
<div class="a" style="left:925px;top:203px;width:1px;height:18px;background:#ababab;"></div>
<div class="t" style="left:953.27px;top:203.00px;font-size:12px;color:#007340;">N</div>
<div class="a" style="left:989px;top:203px;width:1px;height:18px;background:#ababab;"></div>
<div class="t" style="left:1016.93px;top:203.00px;font-size:12px;color:#007340;">O</div>
<div class="a" style="left:1053px;top:203px;width:1px;height:18px;background:#ababab;"></div>
<div class="t" style="left:1081.60px;top:203.00px;font-size:12px;color:#007340;">P</div>
<div class="a" style="left:1117px;top:203px;width:1px;height:18px;background:#ababab;"></div>
<div class="t" style="left:1144.93px;top:203.00px;font-size:12px;color:#007340;">Q</div>
<div class="a" style="left:1181px;top:203px;width:1px;height:18px;background:#ababab;"></div>
<div class="t" style="left:1209.27px;top:203.00px;font-size:12px;color:#007340;">R</div>
<div class="a" style="left:1245px;top:203px;width:1px;height:18px;background:#ababab;"></div>
<div class="t" style="left:1273.60px;top:203.00px;font-size:12px;color:#007340;">S</div>
<div class="a" style="left:1309px;top:203px;width:1px;height:18px;background:#ababab;"></div>
<div class="t" style="left:1337.93px;top:203.00px;font-size:12px;color:#007340;">T</div>
<div class="a" style="left:25px;top:203px;width:1px;height:476px;background:#ababab;"></div>
<div class="a" style="left:89px;top:223px;width:1px;height:455px;background:#dadada;"></div>
<div class="a" style="left:188px;top:223px;width:1px;height:455px;background:#dadada;"></div>
<div class="a" style="left:252px;top:223px;width:1px;height:455px;background:#dadada;"></div>
<div class="a" style="left:349px;top:223px;width:1px;height:455px;background:#dadada;"></div>
<div class="a" style="left:413px;top:223px;width:1px;height:455px;background:#dadada;"></div>
<div class="a" style="left:477px;top:223px;width:1px;height:455px;background:#dadada;"></div>
<div class="a" style="left:541px;top:223px;width:1px;height:455px;background:#dadada;"></div>
<div class="a" style="left:605px;top:223px;width:1px;height:455px;background:#dadada;"></div>
<div class="a" style="left:669px;top:223px;width:1px;height:455px;background:#dadada;"></div>
<div class="a" style="left:733px;top:223px;width:1px;height:455px;background:#dadada;"></div>
<div class="a" style="left:797px;top:223px;width:1px;height:455px;background:#dadada;"></div>
<div class="a" style="left:861px;top:223px;width:1px;height:455px;background:#dadada;"></div>
<div class="a" style="left:925px;top:223px;width:1px;height:455px;background:#dadada;"></div>
<div class="a" style="left:989px;top:223px;width:1px;height:455px;background:#dadada;"></div>
<div class="a" style="left:1053px;top:223px;width:1px;height:455px;background:#dadada;"></div>
<div class="a" style="left:1117px;top:223px;width:1px;height:455px;background:#dadada;"></div>
<div class="a" style="left:1181px;top:223px;width:1px;height:455px;background:#dadada;"></div>
<div class="a" style="left:1245px;top:223px;width:1px;height:455px;background:#dadada;"></div>
<div class="a" style="left:1309px;top:223px;width:1px;height:455px;background:#dadada;"></div>
<div class="a" style="left:26px;top:242px;width:1318px;height:1px;background:#dadada;"></div>
<div class="a" style="left:1px;top:242px;width:24px;height:1px;background:#c0c0c0;"></div>
<div class="a" style="left:26px;top:262px;width:1318px;height:1px;background:#dadada;"></div>
<div class="a" style="left:1px;top:262px;width:24px;height:1px;background:#c0c0c0;"></div>
<div class="a" style="left:26px;top:282px;width:1318px;height:1px;background:#dadada;"></div>
<div class="a" style="left:1px;top:282px;width:24px;height:1px;background:#c0c0c0;"></div>
<div class="a" style="left:26px;top:302px;width:1318px;height:1px;background:#dadada;"></div>
<div class="a" style="left:1px;top:302px;width:24px;height:1px;background:#c0c0c0;"></div>
<div class="a" style="left:26px;top:322px;width:1318px;height:1px;background:#dadada;"></div>
<div class="a" style="left:1px;top:322px;width:24px;height:1px;background:#c0c0c0;"></div>
<div class="a" style="left:26px;top:342px;width:1318px;height:1px;background:#dadada;"></div>
<div class="a" style="left:1px;top:342px;width:24px;height:1px;background:#c0c0c0;"></div>
<div class="a" style="left:26px;top:362px;width:1318px;height:1px;background:#dadada;"></div>
<div class="a" style="left:1px;top:362px;width:24px;height:1px;background:#c0c0c0;"></div>
<div class="a" style="left:26px;top:382px;width:1318px;height:1px;background:#dadada;"></div>
<div class="a" style="left:1px;top:382px;width:24px;height:1px;background:#c0c0c0;"></div>
<div class="a" style="left:26px;top:402px;width:1318px;height:1px;background:#dadada;"></div>
<div class="a" style="left:1px;top:402px;width:24px;height:1px;background:#c0c0c0;"></div>
<div class="a" style="left:26px;top:422px;width:1318px;height:1px;background:#dadada;"></div>
<div class="a" style="left:1px;top:422px;width:24px;height:1px;background:#c0c0c0;"></div>
<div class="a" style="left:26px;top:442px;width:1318px;height:1px;background:#dadada;"></div>
<div class="a" style="left:1px;top:442px;width:24px;height:1px;background:#c0c0c0;"></div>
<div class="a" style="left:26px;top:462px;width:1318px;height:1px;background:#dadada;"></div>
<div class="a" style="left:1px;top:462px;width:24px;height:1px;background:#c0c0c0;"></div>
<div class="a" style="left:26px;top:482px;width:1318px;height:1px;background:#dadada;"></div>
<div class="a" style="left:1px;top:482px;width:24px;height:1px;background:#c0c0c0;"></div>
<div class="a" style="left:26px;top:502px;width:1318px;height:1px;background:#dadada;"></div>
<div class="a" style="left:1px;top:502px;width:24px;height:1px;background:#c0c0c0;"></div>
<div class="a" style="left:26px;top:522px;width:1318px;height:1px;background:#dadada;"></div>
<div class="a" style="left:1px;top:522px;width:24px;height:1px;background:#c0c0c0;"></div>
<div class="a" style="left:26px;top:542px;width:1318px;height:1px;background:#dadada;"></div>
<div class="a" style="left:1px;top:542px;width:24px;height:1px;background:#c0c0c0;"></div>
<div class="a" style="left:26px;top:562px;width:1318px;height:1px;background:#dadada;"></div>
<div class="a" style="left:1px;top:562px;width:24px;height:1px;background:#c0c0c0;"></div>
<div class="a" style="left:26px;top:582px;width:1318px;height:1px;background:#dadada;"></div>
<div class="a" style="left:1px;top:582px;width:24px;height:1px;background:#c0c0c0;"></div>
<div class="a" style="left:26px;top:602px;width:1318px;height:1px;background:#dadada;"></div>
<div class="a" style="left:1px;top:602px;width:24px;height:1px;background:#c0c0c0;"></div>
<div class="a" style="left:26px;top:622px;width:1318px;height:1px;background:#dadada;"></div>
<div class="a" style="left:1px;top:622px;width:24px;height:1px;background:#c0c0c0;"></div>
<div class="a" style="left:26px;top:642px;width:1318px;height:1px;background:#dadada;"></div>
<div class="a" style="left:1px;top:642px;width:24px;height:1px;background:#c0c0c0;"></div>
<div class="a" style="left:26px;top:662px;width:1318px;height:1px;background:#dadada;"></div>
<div class="a" style="left:1px;top:662px;width:24px;height:1px;background:#c0c0c0;"></div>
<div class="t" style="left:9.14px;top:224.00px;font-size:12.5px;color:#262626;transform:scaleX(0.9951);">1</div>
<div class="t" style="left:9.14px;top:244.00px;font-size:12.5px;color:#262626;transform:scaleX(0.9951);">2</div>
<div class="t" style="left:9.14px;top:264.00px;font-size:12.5px;color:#262626;transform:scaleX(0.9951);">3</div>
<div class="t" style="left:9.14px;top:284.00px;font-size:12.5px;color:#262626;transform:scaleX(0.9951);">4</div>
<div class="t" style="left:9.14px;top:324.00px;font-size:12.5px;color:#262626;transform:scaleX(0.9951);">6</div>
<div class="t" style="left:9.14px;top:344.00px;font-size:12.5px;color:#262626;transform:scaleX(0.9951);">7</div>
<div class="t" style="left:9.14px;top:364.00px;font-size:12.5px;color:#262626;transform:scaleX(0.9951);">8</div>
<div class="t" style="left:9.14px;top:384.00px;font-size:12.5px;color:#262626;transform:scaleX(0.9951);">9</div>
<div class="t" style="left:6.08px;top:404.00px;font-size:12.5px;color:#262626;transform:scaleX(0.9376);">10</div>
<div class="t" style="left:6.49px;top:424.00px;font-size:12.5px;color:#262626;transform:scaleX(0.9417);">11</div>
<div class="t" style="left:6.08px;top:444.00px;font-size:12.5px;color:#262626;transform:scaleX(0.9376);">12</div>
<div class="t" style="left:6.08px;top:464.00px;font-size:12.5px;color:#262626;transform:scaleX(0.9376);">13</div>
<div class="t" style="left:6.08px;top:484.00px;font-size:12.5px;color:#262626;transform:scaleX(0.9376);">14</div>
<div class="t" style="left:6.08px;top:504.00px;font-size:12.5px;color:#262626;transform:scaleX(0.9376);">15</div>
<div class="t" style="left:6.08px;top:524.00px;font-size:12.5px;color:#262626;transform:scaleX(0.9376);">16</div>
<div class="t" style="left:6.08px;top:544.00px;font-size:12.5px;color:#262626;transform:scaleX(0.9376);">17</div>
<div class="t" style="left:6.08px;top:564.00px;font-size:12.5px;color:#262626;transform:scaleX(0.9376);">18</div>
<div class="t" style="left:6.08px;top:584.00px;font-size:12.5px;color:#262626;transform:scaleX(0.9376);">19</div>
<div class="t" style="left:6.08px;top:604.00px;font-size:12.5px;color:#262626;transform:scaleX(0.9376);">20</div>
<div class="t" style="left:6.08px;top:624.00px;font-size:12.5px;color:#262626;transform:scaleX(0.9376);">21</div>
<div class="t" style="left:6.08px;top:644.00px;font-size:12.5px;color:#262626;transform:scaleX(0.9376);">22</div>
<div class="t" style="left:6.08px;top:664.00px;font-size:12.5px;color:#262626;transform:scaleX(0.9376);">23</div>
<div class="a" style="left:1px;top:303px;width:23px;height:19px;background:#d2d2d2;"></div>
<div class="t" style="left:9.14px;top:304.00px;font-size:12.5px;color:#1d5c45;transform:scaleX(0.9951);">5</div>
<div class="a" style="left:24px;top:303px;width:2px;height:19px;background:#007340;"></div>
<div class="a" style="left:26px;top:304px;width:1318px;height:17px;background:#c6c6c6;"></div>
<div class="a" style="left:89px;top:304px;width:1px;height:17px;background:#b0b0b0;"></div>
<div class="a" style="left:188px;top:304px;width:1px;height:17px;background:#b0b0b0;"></div>
<div class="a" style="left:252px;top:304px;width:1px;height:17px;background:#b0b0b0;"></div>
<div class="a" style="left:349px;top:304px;width:1px;height:17px;background:#b0b0b0;"></div>
<div class="a" style="left:413px;top:304px;width:1px;height:17px;background:#b0b0b0;"></div>
<div class="a" style="left:477px;top:304px;width:1px;height:17px;background:#b0b0b0;"></div>
<div class="a" style="left:541px;top:304px;width:1px;height:17px;background:#b0b0b0;"></div>
<div class="a" style="left:605px;top:304px;width:1px;height:17px;background:#b0b0b0;"></div>
<div class="a" style="left:669px;top:304px;width:1px;height:17px;background:#b0b0b0;"></div>
<div class="a" style="left:733px;top:304px;width:1px;height:17px;background:#b0b0b0;"></div>
<div class="a" style="left:797px;top:304px;width:1px;height:17px;background:#b0b0b0;"></div>
<div class="a" style="left:861px;top:304px;width:1px;height:17px;background:#b0b0b0;"></div>
<div class="a" style="left:925px;top:304px;width:1px;height:17px;background:#b0b0b0;"></div>
<div class="a" style="left:989px;top:304px;width:1px;height:17px;background:#b0b0b0;"></div>
<div class="a" style="left:1053px;top:304px;width:1px;height:17px;background:#b0b0b0;"></div>
<div class="a" style="left:1117px;top:304px;width:1px;height:17px;background:#b0b0b0;"></div>
<div class="a" style="left:1181px;top:304px;width:1px;height:17px;background:#b0b0b0;"></div>
<div class="a" style="left:1245px;top:304px;width:1px;height:17px;background:#b0b0b0;"></div>
<div class="a" style="left:1309px;top:304px;width:1px;height:17px;background:#b0b0b0;"></div>
<div class="a" style="left:26px;top:223px;width:323px;height:18px;background:#6bd345;"></div>
<div class="a" style="left:26px;top:243px;width:63px;height:99px;background:#f8cbad;"></div>
<div class="a" style="left:26px;top:304px;width:63px;height:17px;background:#f8cbad;"></div>
<div class="a" style="left:89px;top:223px;width:1px;height:119px;background:#000;"></div>
<div class="a" style="left:188px;top:223px;width:1px;height:119px;background:#000;"></div>
<div class="a" style="left:252px;top:223px;width:1px;height:119px;background:#000;"></div>
<div class="a" style="left:349px;top:223px;width:1px;height:119px;background:#000;"></div>
<div class="a" style="left:26px;top:242px;width:323px;height:1px;background:#000;"></div>
<div class="a" style="left:26px;top:262px;width:323px;height:1px;background:#000;"></div>
<div class="a" style="left:26px;top:282px;width:323px;height:1px;background:#000;"></div>
<div class="t" style="left:38.60px;top:223.50px;font-size:13.6px;color:#000;transform:scaleX(1.0524);">№ п/п</div>
<div class="t" style="left:109.60px;top:223.50px;font-size:13.6px;color:#000;">Фамилия</div>
<div class="t" style="left:206.60px;top:223.50px;font-size:13.6px;color:#000;transform:scaleX(1.0116);">Имя</div>
<div class="t" style="left:271.60px;top:223.50px;font-size:13.6px;color:#000;transform:scaleX(0.9777);">Отчество</div>
<div class="t" style="left:54.60px;top:243.50px;font-size:13.6px;color:#000;transform:scaleX(0.8993);">1</div>
<div class="t" style="left:54.60px;top:263.50px;font-size:13.6px;color:#000;transform:scaleX(0.8993);">2</div>
<div class="t" style="left:54.60px;top:283.50px;font-size:13.6px;color:#000;transform:scaleX(0.8993);">3</div>
<div class="t" style="left:54.60px;top:303.50px;font-size:13.6px;color:#000;transform:scaleX(0.8993);">4</div>
<div class="t" style="left:54.60px;top:323.50px;font-size:13.6px;color:#000;transform:scaleX(0.8993);">5</div>
<div class="t" style="left:278.10px;top:243.50px;font-size:13.6px;color:#000;transform:scaleX(1.0072);">ревич</div>
<div class="t" style="left:279.10px;top:263.50px;font-size:13.6px;color:#000;transform:scaleX(0.9975);">имович</div>
<div class="t" style="left:255.10px;top:283.50px;font-size:13.6px;color:#000;transform:scaleX(0.9755);">Павлович</div>
<div class="t" style="left:92.60px;top:283.50px;font-size:13.6px;color:#000;transform:scaleX(0.9804);">Иванов</div>
<div class="t" style="left:192.60px;top:283.50px;font-size:13.6px;color:#000;transform:scaleX(0.9325);">Степан</div>
<div class="t" style="left:92.10px;top:303.50px;font-size:13.6px;color:#000;transform:scaleX(0.9970);">Николаева</div>
<div class="t" style="left:190.60px;top:303.50px;font-size:13.6px;color:#000;transform:scaleX(0.9937);">Юлия</div>
<div class="t" style="left:254.90px;top:303.50px;font-size:13.6px;color:#000;transform:scaleX(1.0119);">Алексеевна</div>
<div class="t" style="left:255.10px;top:323.50px;font-size:13.6px;color:#000;transform:scaleX(0.9809);">Евгеньевна</div>
<div class="a" style="left:26px;top:301px;width:1318px;height:2px;background:#007340;"></div>
<div class="a" style="left:26px;top:303px;width:1318px;height:1px;background:#fff;"></div>
<div class="a" style="left:26px;top:321px;width:1318px;height:1px;background:#fff;"></div>
<div class="a" style="left:26px;top:322px;width:1318px;height:2px;background:;background:repeating-linear-gradient(90deg,#007340 0 7px,#fff 7px 9px);"></div>
<div class="a" style="left:26px;top:341px;width:1318px;height:2px;background:;background:repeating-linear-gradient(90deg,#007340 0 7px,#fff 7px 9px);"></div>
<div class="a" style="left:1344px;top:203px;width:1px;height:476px;background:#c6c6c6;"></div>
<div class="a" style="left:1px;top:678px;width:1364px;height:1px;background:#c6c6c6;"></div>
<div class="a" style="left:1345px;top:203px;width:20px;height:476px;background:#e6e6e6;"></div>
<div class="a" style="left:1348px;top:205px;width:15px;height:15px;background:#fff;box-shadow:inset 0 0 0 1px #ababab"></div>
<svg class="a" style="left:1351px;top:210px;" width="9" height="5" viewBox="0 0 9 5"><path d="M0.5 4.5H8.5L4.5 0.5Z" fill="#786e6e"/></svg>
<div class="a" style="left:1348px;top:221px;width:15px;height:421px;background:#fff;box-shadow:inset 0 0 0 1px #ababab"></div>
<div class="a" style="left:1348px;top:664px;width:15px;height:15px;background:#fff;box-shadow:inset 0 0 0 1px #ababab"></div>
<svg class="a" style="left:1351px;top:669px;" width="9" height="5" viewBox="0 0 9 5"><path d="M0.5 0.5H8.5L4.5 4.5Z" fill="#786e6e"/></svg>
<div class="a" style="left:1px;top:679px;width:1364px;height:27px;background:#e6e6e6;"></div>
<svg class="a" style="left:26px;top:686px;" width="6" height="10" viewBox="0 0 6 10"><path d="M5 0.5V9.5L0.5 5Z" fill="#c3c3c3"/></svg>
<svg class="a" style="left:55px;top:686px;" width="6" height="10" viewBox="0 0 6 10"><path d="M1 0.5V9.5L5.5 5Z" fill="#c3c3c3"/></svg>
<div class="a" style="left:100px;top:678px;width:107px;height:24px;background:#fff;box-shadow:-1px 0 0 #c6c6c6, 1px 0 0 #c6c6c6"></div>
<div class="a" style="left:100px;top:700px;width:107px;height:2px;background:#007340;"></div>
<div class="t" style="left:112.60px;top:681.00px;font-size:12.6px;color:#007340;font-weight:700;transform:scaleX(1.0105);">microexcel.ru</div>
<svg class="a" style="left:239px;top:683px;" width="18" height="18" viewBox="0 0 18 18"><circle cx="8.75" cy="8.75" r="7.6" fill="none" stroke="#786e6e" stroke-width="1.3"/><path d="M8.75 4.5V13M4.5 8.75H13" stroke="#786e6e" stroke-width="1.6"/></svg>
<div class="a" style="left:819px;top:687px;width:2px;height:2px;background:#a0a0a0;"></div>
<div class="a" style="left:819px;top:691px;width:2px;height:2px;background:#a0a0a0;"></div>
<div class="a" style="left:819px;top:695px;width:2px;height:2px;background:#a0a0a0;"></div>
<div class="a" style="left:836px;top:685px;width:511px;height:15px;background:#fff;box-shadow:inset 0 0 0 1px #ababab"></div>
<div class="a" style="left:850px;top:686px;width:2px;height:13px;background:#ababab;"></div>
<div class="a" style="left:1304px;top:686px;width:29px;height:13px;background:#e0e0e0;"></div>
<div class="a" style="left:1332px;top:685px;width:15px;height:15px;background:#fff;box-shadow:inset 0 0 0 1px #ababab"></div>
<svg class="a" style="left:841px;top:689px;" width="5" height="9" viewBox="0 0 5 9"><path d="M4.5 0.5V8L0.5 4.25Z" fill="#786e6e"/></svg>
<svg class="a" style="left:1337px;top:689px;" width="5" height="9" viewBox="0 0 5 9"><path d="M0.5 0.5V8L4.5 4.25Z" fill="#786e6e"/></svg>
<div class="a" style="left:1px;top:706px;width:1364px;height:1px;background:#d6d6d6;"></div>
<div class="a" style="left:1px;top:707px;width:1364px;height:20px;background:#f3f3f3;"></div>
<div class="a" style="left:0px;top:727px;width:1366px;height:1px;background:#007340;"></div>
<div class="t" style="left:7.60px;top:706.00px;font-size:11.2px;color:#262626;transform:scaleX(1.0273);">Укажите ячейку и нажмите ВВОД или выберите &quot;Вставить&quot;</div>
<div class="t" style="left:850.60px;top:706.00px;font-size:11.2px;color:#262626;transform:scaleX(0.9806);">Среднее: 4</div>
<div class="t" style="left:922.60px;top:706.00px;font-size:11.2px;color:#262626;transform:scaleX(1.0166);">Количество: 4</div>
<div class="t" style="left:1013.60px;top:706.00px;font-size:11.2px;color:#262626;transform:scaleX(0.9613);">Сумма: 4</div>
<div class="a" style="left:1077px;top:707px;width:38px;height:20px;background:#c6c6c6;"></div>
<svg class="a" style="left:1089px;top:710px;" width="14" height="14" viewBox="0 0 14 14"><rect x="0.5" y="0.5" width="12" height="12" fill="none" stroke="#786e6e"/><path d="M4.5 0.5V12.5M8.5 0.5V12.5M0.5 4.5H12.5M0.5 8.5H12.5" stroke="#786e6e"/></svg>
<svg class="a" style="left:1127px;top:710px;" width="15" height="14" viewBox="0 0 15 14"><rect x="0.5" y="0.5" width="13" height="12" fill="none" stroke="#786e6e"/><rect x="3.5" y="2.5" width="7" height="8" fill="none" stroke="#786e6e"/><path d="M5 5.5H9M5 7.5H9" stroke="#786e6e"/></svg>
<svg class="a" style="left:1165px;top:710px;" width="15" height="14" viewBox="0 0 15 14"><rect x="0.5" y="0.5" width="13" height="12" fill="none" stroke="#786e6e"/><path d="M3.5 0.5V6.5H6.5V0.5M6.5 0.5V6.5" fill="none" stroke="#786e6e"/></svg>
<div class="a" style="left:1196px;top:717px;width:6px;height:2px;background:#6f6666;"></div>
<div class="a" style="left:1206px;top:717px;width:101px;height:1px;background:#a0a0a0;"></div>
<div class="a" style="left:1254px;top:711px;width:5px;height:11px;background:#6f6666;"></div>
<div class="a" style="left:1309px;top:717px;width:8px;height:2px;background:#6f6666;"></div>
<div class="a" style="left:1312px;top:713px;width:2px;height:9px;background:#6f6666;"></div>
<div class="t" style="left:1328.60px;top:706.00px;font-size:11.2px;color:#262626;transform:scaleX(0.9070);">100 %</div>
<div class="a" style="left:19px;top:243px;width:260px;height:53px;background:#fff;box-shadow:0 0 0 1px #c8c8c8, 2px 2px 3px rgba(0,0,0,0.15)"></div>
<div class="a" style="left:22px;top:245px;width:64px;height:24px;background:#fff;box-shadow:inset 0 0 0 1px #c6c6c6"></div>
<div class="a" style="left:86px;top:245px;width:46px;height:24px;background:#fff;box-shadow:inset 0 0 0 1px #c6c6c6"></div>
<div class="t" style="left:25.20px;top:246.00px;font-size:12.5px;color:#1c1c1c;transform:scaleX(0.9654);">Calibri</div>
<div class="t" style="left:89.40px;top:246.00px;font-size:12.5px;color:#1c1c1c;transform:scaleX(0.8170);">11</div>
<svg class="a" style="left:76px;top:255px;" width="6" height="4" viewBox="0 0 6 4"><path d="M0 0.5H5.5L2.75 3.5Z" fill="#786e6e"/></svg>
<svg class="a" style="left:122px;top:255px;" width="6" height="4" viewBox="0 0 6 4"><path d="M0 0.5H5.5L2.75 3.5Z" fill="#786e6e"/></svg>
<svg class="a" style="left:137px;top:248px;" width="14" height="15" viewBox="0 0 14 15"><path d="M0.9 13.9L4.75 3.6L8.6 13.9M2.4 10.2H7.1" fill="none" stroke="#3d3a3a" stroke-width="1.5"/><path d="M7.9 3.9L10.5 0.8L13.1 3.9Z" fill="#2a95bd"/></svg>
<svg class="a" style="left:161px;top:248px;" width="13" height="15" viewBox="0 0 13 15"><path d="M0.8 13.9L3.75 5.8L6.7 13.9M2 11H5.5" fill="none" stroke="#3d3a3a" stroke-width="1.4"/><path d="M7 0.8H12L9.5 3.9Z" fill="#2a95bd"/></svg>
<svg class="a" style="left:179px;top:249px;" width="18" height="18" viewBox="0 0 18 18"><rect x="0.75" y="0.75" width="14.5" height="8" fill="#fff" stroke="#2a95bd" stroke-width="1.5"/><path d="M0 0H3.5L0 3.5ZM16 0H12.5L16 3.5ZM0 9.5V6L3.5 9.5Z" fill="#2a95bd"/><circle cx="7" cy="4.5" r="2.3" fill="#2a95bd"/><rect x="7" y="4" width="2.5" height="2" fill="#fff"/><rect x="10" y="6" width="7" height="3.6" rx="1.6" fill="#f2a46e"/><rect x="10" y="8.6" width="7" height="3.6" rx="1.6" fill="#f2a46e" stroke="#f3f3f3" stroke-width="0.6"/><rect x="10" y="11.2" width="7" height="1.8" fill="#f2a46e"/><rect x="4" y="11" width="7" height="3.6" rx="1.6" fill="#f2a46e" stroke="#f3f3f3" stroke-width="0.6"/><rect x="4" y="13.6" width="7" height="3.6" rx="1.6" fill="#f2a46e" stroke="#f3f3f3" stroke-width="0.6"/></svg>
<svg class="a" style="left:201px;top:254px;" width="6" height="4" viewBox="0 0 6 4"><path d="M0 0.5H5.5L2.75 3.5Z" fill="#786e6e"/></svg>
<div class="t" style="left:215.60px;top:248.00px;font-size:14px;color:#4a4444;transform:scaleX(1.0284);">%</div>
<div class="t" style="left:235.60px;top:247.50px;font-size:9.5px;color:#4a4444;transform:scaleX(0.9340);">000</div>
<svg class="a" style="left:257px;top:249px;" width="16" height="16" viewBox="0 0 16 16"><rect x="0.5" y="0.5" width="14.5" height="14.5" fill="none" stroke="#786e6e" stroke-width="1"/><path d="M0.5 4H15M0.5 11.5H15M7.5 0.5V4M7.5 11.5V15" stroke="#786e6e" stroke-width="1"/><path d="M3 7.75H12.5M4.5 6.2L3 7.75L4.5 9.3M11 6.2L12.5 7.75L11 9.3" fill="none" stroke="#2a95bd" stroke-width="1"/></svg>
<div class="t" style="left:26.64px;top:271.00px;font-size:12.5px;color:#3d3a3a;font-weight:700;transform:scaleX(1.1228);">Ж</div>
<div class="t" style="left:49.60px;top:271.00px;font-size:12px;color:#3d3a3a;font-weight:700;transform:scaleX(1.1983);font-style:italic;">К</div>
<div class="a" style="left:66px;top:269px;width:22px;height:24px;background:#c6c6c6;"></div>
<div class="a" style="left:70px;top:276px;width:14px;height:1px;background:#786e6e;"></div>
<div class="a" style="left:72px;top:279px;width:10px;height:1px;background:#786e6e;"></div>
<div class="a" style="left:70px;top:282px;width:14px;height:1px;background:#786e6e;"></div>
<div class="a" style="left:72px;top:285px;width:10px;height:1px;background:#786e6e;"></div>
<svg class="a" style="left:91px;top:271px;" width="18" height="18" viewBox="0 0 18 18"><path d="M2 8.4L7.1 2.5L13.7 7.3L7.9 12.9Z" fill="#fff" stroke="#786e6e" stroke-width="1.1"/><circle cx="7.2" cy="2.6" r="1.6" fill="none" stroke="#786e6e" stroke-width="1"/><path d="M7.2 2.5L8.3 6.5" stroke="#786e6e" stroke-width="1"/><path d="M13 5C15 5.5 16.2 7 16 9.5C15.8 11.5 14.5 12.5 13.2 12.8C14 11 13.8 9 13 7.5Z" fill="#2a95bd"/><rect x="0" y="13" width="16" height="4" fill="#fff"/></svg>
<svg class="a" style="left:113px;top:279px;" width="6" height="4" viewBox="0 0 6 4"><path d="M0 0.5H5.5L2.75 3.5Z" fill="#786e6e"/></svg>
<svg class="a" style="left:125px;top:274px;" width="17" height="16" viewBox="0 0 17 16"><path d="M4.8 11.2L8.2 1.8H8.8L12.2 11.2M6 8.3H11" fill="none" stroke="#3d3a3a" stroke-width="1.7"/><rect x="0" y="11" width="16" height="4" fill="#ff0000"/></svg>
<svg class="a" style="left:147px;top:279px;" width="6" height="4" viewBox="0 0 6 4"><path d="M0 0.5H5.5L2.75 3.5Z" fill="#786e6e"/></svg>
<svg class="a" style="left:159px;top:273px;" width="15" height="15" viewBox="0 0 15 15"><rect x="0.5" y="0.5" width="13" height="13" fill="none" stroke="#786e6e" stroke-width="1" stroke-dasharray="1 2"/><path d="M7 0.5V13.5M0.5 7H13.5" stroke="#786e6e" stroke-width="1" stroke-dasharray="1 2"/><path d="M0.5 13.5H13.5" stroke="#786e6e" stroke-width="1"/></svg>
<svg class="a" style="left:181px;top:279px;" width="6" height="4" viewBox="0 0 6 4"><path d="M0 0.5H5.5L2.75 3.5Z" fill="#786e6e"/></svg>
<svg class="a" style="left:193px;top:274px;" width="16" height="15" viewBox="0 0 16 15"><path d="M7 3.5H2" stroke="#2a95bd" stroke-width="1.3"/><path d="M0 3.5L3 1V6Z" fill="#2a95bd"/><text x="9.6" y="6" font-family="Liberation Sans" font-size="8" fill="#3d3a3a">0</text><text x="1.6" y="13.4" font-family="Liberation Sans" font-size="8" fill="#3d3a3a" textLength="12.5" lengthAdjust="spacingAndGlyphs">,00</text></svg>
<svg class="a" style="left:215px;top:274px;" width="16" height="15" viewBox="0 0 16 15"><text x="0.5" y="6" font-family="Liberation Sans" font-size="8" fill="#3d3a3a" textLength="13" lengthAdjust="spacingAndGlyphs">,00</text><path d="M0 11H5" stroke="#2a95bd" stroke-width="1.3"/><path d="M7 11L4 8.5V13.5Z" fill="#2a95bd"/><text x="5.5" y="13.4" font-family="Liberation Sans" font-size="8" fill="#3d3a3a" textLength="8" lengthAdjust="spacingAndGlyphs">,0</text></svg>
<svg class="a" style="left:237px;top:273px;" width="17" height="16" viewBox="0 0 17 16"><g transform="translate(9,7.5) rotate(45) translate(-7,-9)"><rect x="5.5" y="0" width="3" height="5" fill="#786e6e"/><rect x="3.5" y="4.5" width="7" height="6" fill="#786e6e"/><path d="M3.5 11H10.5L12 17.5H2Z" fill="#f4ad79"/></g></svg>
<div class="a" style="left:19px;top:313px;width:218px;height:298px;background:#fff;box-shadow:0 0 0 1px #c6c6c6, 3px 3px 4px rgba(0,0,0,0.18)"></div>
<svg class="a" style="left:24px;top:317px;" width="17" height="17" viewBox="0 0 17 17"><path d="M5 1.2L11.2 10.6M11.8 1.2L5.6 10.6" stroke="#786e6e" stroke-width="1.7"/><circle cx="4" cy="13" r="2.8" fill="#fff" stroke="#2a95bd" stroke-width="1.1"/><circle cx="12.3" cy="13" r="2.8" fill="#fff" stroke="#2a95bd" stroke-width="1.1"/></svg>
<div class="t" style="left:52.10px;top:316.00px;font-size:12px;color:#333333;transform:scaleX(0.9611);">Вырезать</div>
<div class="a" style="left:59px;top:331px;width:9px;height:1px;background:#333333;"></div>
<svg class="a" style="left:24px;top:343px;" width="16" height="15" viewBox="0 0 16 15"><path d="M0.5 0.5H5.5L7.5 2.5V10.5H0.5Z" fill="#fff" stroke="#786e6e" stroke-width="1"/><path d="M2 3.5H4M2 5.5H5M2 7.5H5" stroke="#2a95bd" stroke-width="1"/><path d="M6.5 3.5H11.5L14.5 6.5V13.5H6.5Z" fill="#fff" stroke="#786e6e" stroke-width="1"/><path d="M8.5 6.5H10.5M8.5 8.5H12.5M8.5 10.5H12.5" stroke="#2a95bd" stroke-width="1"/></svg>
<div class="t" style="left:52.10px;top:340.00px;font-size:12px;color:#333333;transform:scaleX(1.0107);">Копировать</div>
<div class="a" style="left:52px;top:355px;width:7px;height:1px;background:#333333;"></div>
<div class="a" style="left:44px;top:362px;width:192px;height:22px;background:#e8e8e8;"></div>
<svg class="a" style="left:25px;top:365px;" width="16" height="17" viewBox="0 0 16 17"><rect x="0" y="2" width="11" height="13" rx="1" fill="#f2a46e"/><rect x="2.5" y="1" width="6" height="3" fill="#786e6e"/><rect x="4.5" y="0" width="2" height="2" fill="#786e6e"/><path d="M7.5 6.5H12L14.5 9V15.5H7.5Z" fill="#fff" stroke="#786e6e" stroke-width="1"/></svg>
<div class="t" style="left:53.60px;top:363.00px;font-size:12px;color:#444;font-weight:700;transform:scaleX(0.9613);">Параметры вставки:</div>
<svg class="a" style="left:50px;top:388px;" width="23" height="24" viewBox="0 0 23 24"><g transform="scale(0.74)"><rect x="0" y="3" width="24" height="25" rx="1.5" fill="#f4ad79"/><rect x="4" y="2" width="16" height="7" fill="#fff"/><path d="M5 3H9V1Q9 0 10 0H14Q15 0 15 1V3H19V7H5Z" fill="#786e6e"/><rect x="11" y="1.6" width="2" height="2" fill="#fff"/><path d="M14.5 11.5H23L27.5 16V29.5H14.5Z" fill="#fff" stroke="#786e6e" stroke-width="1.3"/><path d="M23 11.5V16H27.5" fill="none" stroke="#786e6e" stroke-width="1.1"/></g></svg>
<div class="t" style="left:52.10px;top:416.00px;font-size:12px;color:#a6a6a6;transform:scaleX(0.9618);">Специальная вставка...</div>
<div class="a" style="left:213px;top:419px;width:1px;height:17px;background:#e0e0e0;"></div>
<svg class="a" style="left:222px;top:421px;" width="6" height="9" viewBox="0 0 6 9"><path d="M0.5 0.5V8.5L5 4.5Z" fill="#6f6666"/></svg>
<div class="a" style="left:52px;top:438px;width:184px;height:1px;background:#e1e1e1;"></div>
<div class="t" style="left:52.10px;top:442.00px;font-size:12px;color:#333333;transform:scaleX(0.9810);">Вставить вырезанные ячейки</div>
<div class="t" style="left:52.10px;top:466.00px;font-size:12px;color:#333333;transform:scaleX(0.9669);">Удалить</div>
<div class="a" style="left:52px;top:481px;width:8px;height:1px;background:#333333;"></div>
<div class="t" style="left:52.10px;top:490.00px;font-size:12px;color:#333333;transform:scaleX(1.0041);">Очистить содержимое</div>
<div class="a" style="left:52px;top:513px;width:184px;height:1px;background:#e1e1e1;"></div>
<svg class="a" style="left:24px;top:518px;" width="16" height="17" viewBox="0 0 16 17"><rect x="0.5" y="0.5" width="14" height="15" fill="#fff" stroke="#786e6e" stroke-width="1"/><rect x="0" y="0" width="15" height="2.5" fill="#2a95bd"/><circle cx="4" cy="7" r="1.2" fill="#786e6e"/><circle cx="4" cy="11.5" r="1.2" fill="none" stroke="#786e6e" stroke-width="0.8"/><path d="M7 7H12M7 11.5H12" stroke="#786e6e" stroke-width="1"/></svg>
<div class="t" style="left:52.10px;top:516.00px;font-size:12px;color:#333333;transform:scaleX(0.9884);">Формат ячеек...</div>
<div class="t" style="left:52.10px;top:540.00px;font-size:12px;color:#333333;transform:scaleX(0.9776);">Высота строки...</div>
<div class="t" style="left:52.10px;top:564.00px;font-size:12px;color:#333333;transform:scaleX(0.9837);">Скрыть</div>
<div class="t" style="left:52.10px;top:588.00px;font-size:12px;color:#333333;transform:scaleX(0.9664);">Показать</div>
<div class="a" style="left:174px;top:457px;width:6px;height:1px;background:#333333;"></div>
<div class="a" style="left:140px;top:505px;width:8px;height:1px;background:#333333;"></div>
<div class="a" style="left:98px;top:531px;width:6px;height:1px;background:#333333;"></div>
<div class="a" style="left:59px;top:555px;width:8px;height:1px;background:#333333;"></div>
<div class="a" style="left:87px;top:579px;width:6px;height:1px;background:#333333;"></div>
<div class="a" style="left:91px;top:603px;width:6px;height:1px;background:#333333;"></div>
<div class="a" style="left:141px;top:431px;width:6px;height:1px;background:#b0b0b0;"></div>
<div class="a" style="left:2px;top:298px;width:22.6px;height:25.2px;border:2.6px solid #f00;border-radius:10px 10px 11px 11px;"></div>
<div class="a" style="left:32px;top:440px;width:196px;height:21.6px;border:2.6px solid #f00;border-radius:9px;"></div>
</body></html>
